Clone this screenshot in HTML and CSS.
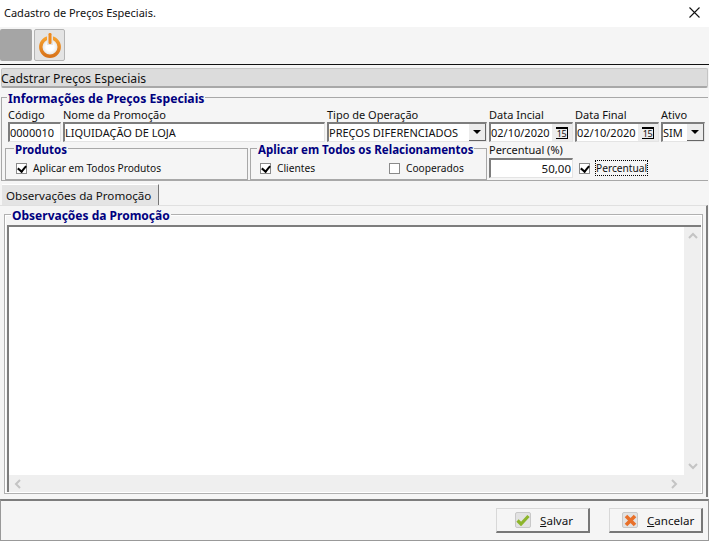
FILE: index.html
```html
<!DOCTYPE html>
<html>
	<head>
		<meta charset="utf-8" />
		<title>Cadastro de Preços Especiais</title>
		<link rel="stylesheet" href="styles.css">
	</head>
	<body>
		<header class="title-bar">
			<span>Cadastro de Preços Especiais.</span>
			<svg class="close" width="11" height="11" viewBox="0 0 11 11"><path d="M0.5 0.5L10.5 10.5M10.5 0.5L0.5 10.5" stroke="#111" stroke-width="1.1" fill="none"/></svg>
		</header>
		<div class="toolbar">
			<div class="tool-blank"></div>
			<div class="tool-power">
				<svg width="26" height="28" viewBox="0 0 26 28">
					<defs>
						<linearGradient id="ring" x1="0" y1="0" x2="0" y2="1">
							<stop offset="0" stop-color="#f5a030"/>
							<stop offset="1" stop-color="#d9741a"/>
						</linearGradient>
						<radialGradient id="core">
							<stop offset="0.4" stop-color="#fff"/>
							<stop offset="1" stop-color="#dcdcdc"/>
						</radialGradient>
					</defs>
					<circle cx="13" cy="16" r="9.2" fill="url(#core)" stroke="url(#ring)" stroke-width="3.4"/>
					<rect x="10" y="1" width="6" height="13" fill="#e4e4e4"/>
					<rect x="11.5" y="2" width="3" height="11" rx="1.2" fill="#ee8a1e"/>
				</svg>
			</div>
		</div>
		<div class="section-bar">Cadstrar Preços Especiais</div>

		<section class="group info">
			<div class="legend">Informações de Preços Especiais</div>
			<div class="fields">
				<label class="field w-code"><span>Código</span><div class="input">0000010</div></label>
				<label class="field w-name"><span>Nome da Promoção</span><div class="input">LIQUIDAÇÃO DE LOJA</div></label>
				<label class="field w-tipo"><span>Tipo de Operação</span>
					<div class="input combo">PREÇOS DIFERENCIADOS<i class="drop"></i></div>
				</label>
				<label class="field w-date"><span>Data Incial</span>
					<div class="input combo">02/10/2020<i class="cal"><b>15</b></i></div>
				</label>
				<label class="field w-date"><span>Data Final</span>
					<div class="input combo">02/10/2020<i class="cal"><b>15</b></i></div>
				</label>
				<label class="field w-ativo"><span>Ativo</span>
					<div class="input combo">SIM<i class="drop"></i></div>
				</label>
			</div>
			<div class="lower">
				<div class="group sub w-prod">
					<div class="legend small">Produtos</div>
					<div class="check-row"><span class="check on"></span>Aplicar em Todos Produtos</div>
				</div>
				<div class="group sub w-rel">
					<div class="legend small">Aplicar em Todos os Relacionamentos</div>
					<div class="check-row">
						<div class="check-item first"><span class="check on"></span>Clientes</div>
						<div class="check-item"><span class="check"></span>Cooperados</div>
					</div>
				</div>
				<div class="percent">
					<span>Percentual (%)</span>
					<div class="percent-row">
						<div class="input number">50,00</div>
						<span class="check on"></span>
						<span class="focus-label">Percentual</span>
					</div>
				</div>
			</div>
		</section>

		<div class="tabs"><div class="tab">Observações da Promoção</div></div>
		<div class="tab-panel">
			<section class="group notes">
				<div class="legend">Observações da Promoção</div>
				<div class="memo">
					<div class="memo-top">
						<div class="memo-text"></div>
						<div class="scroll-v">
							<svg width="10" height="7" viewBox="0 0 10 7"><path d="M1 6L5 2L9 6" stroke="#c4c4c4" stroke-width="2" fill="none"/></svg>
							<svg width="10" height="7" viewBox="0 0 10 7"><path d="M1 1L5 5L9 1" stroke="#c4c4c4" stroke-width="2" fill="none"/></svg>
						</div>
					</div>
					<div class="scroll-h">
						<svg width="7" height="10" viewBox="0 0 7 10"><path d="M6 1L2 5L6 9" stroke="#c4c4c4" stroke-width="2" fill="none"/></svg>
						<svg width="7" height="10" viewBox="0 0 7 10"><path d="M1 1L5 5L1 9" stroke="#c4c4c4" stroke-width="2" fill="none"/></svg>
					</div>
				</div>
			</section>
		</div>

		<footer class="actions">
			<button class="btn">
				<span class="btn-icon">
					<svg width="14" height="12" viewBox="0 0 14 12"><path d="M1.5 6.5L5 10L12.5 2" stroke="#8db52c" stroke-width="3.2" fill="none"/></svg>
				</span>
				<span class="btn-text"><u>S</u>alvar</span>
			</button>
			<button class="btn cancel">
				<span class="btn-icon">
					<svg width="13" height="13" viewBox="0 0 13 13"><path d="M2 2L11 11M11 2L2 11" stroke="#e8702a" stroke-width="3.6" fill="none"/></svg>
				</span>
				<span class="btn-text"><u>C</u>ancelar</span>
			</button>
		</footer>
	</body>
</html>
```

FILE: styles.css
```css
body {
	margin: 0;
	width: 709px;
	height: 541px;
	overflow: hidden;
	background: #f5f5f5;
	color: #111;
	font-family: "Noto Sans", sans-serif;
	font-size: 11px;
	line-height: 14px;
}

.title-bar {
	height: 27px;
	background: #fff;
	display: flex;
	align-items: center;
	justify-content: space-between;
	padding: 0 9px 2px 4px;
	box-sizing: border-box;
}

.toolbar {
	height: 38px;
	box-sizing: border-box;
	display: flex;
	gap: 2px;
	padding-top: 2px;
	background: #f5f5f5;
	border-bottom: 1px solid #111;
}

.tool-blank {
	width: 32px;
	height: 32px;
	background: #a5a5a5;
	border-radius: 2px;
}

.tool-power {
	width: 29px;
	height: 30px;
	background: #e4e4e4;
	border: 1px solid #b4b4b4;
	border-radius: 2px;
	display: flex;
	align-items: center;
	justify-content: center;
}

.section-bar {
	height: 20px;
	margin: 3px 0 0 1px;
	width: 707px;
	box-sizing: border-box;
	background: #dcdcdc;
	border: 1px solid #c4c4c4;
	border-bottom: 2px solid #a8a8a8;
	border-radius: 2px;
	font-size: 12.2px;
	line-height: 19px;
	white-space: nowrap;
	text-indent: -1px;
}

.group {
	position: relative;
	border: 1px solid #a8a8a8;
	box-sizing: border-box;
}

.legend {
	position: absolute;
	left: 5px;
	top: -5px;
	padding: 0 1px;
	background: #f5f5f5;
	color: #00007f;
	font-size: 12.2px;
	line-height: 12px;
	font-weight: bold;
	white-space: nowrap;
}

.legend.small {
	left: 8px;
	top: -5px;
	font-size: 11.5px;
}

.w-rel .legend.small {
	left: 6px;
}

.notes .legend {
	left: 6px;
	font-size: 12px;
}

.info {
	margin: 9px 0 0 1px;
	width: 707px;
	height: 84px;
	border-right: 0;
	padding: 8px 0 0 6px;
}

.fields {
	display: flex;
	gap: 1px;
	column-gap: 2px;
}

.field {
	display: flex;
	flex-direction: column;
	gap: 0;
}

.field span {
	height: 16px;
	line-height: 17px;
	white-space: nowrap;
}

.input {
	height: 20px;
	box-sizing: border-box;
	background: #fff;
	border: 1px solid #e4e4e4;
	border-top: 2px solid #7d7d7d;
	border-left: 2px solid #7d7d7d;
	padding: 0;
	line-height: 17px;
	white-space: nowrap;
	position: relative;
}

.w-code { width: 53px; }
.w-name { width: 262px; }
.w-tipo { width: 160px; }
.w-date { width: 84px; }
.w-ativo { width: 44px; }

.drop {
	position: absolute;
	right: 0;
	top: 0;
	bottom: 0;
	width: 17px;
	background: #ececec;
	border-right: 1px solid #666;
	border-bottom: 1px solid #666;
	box-sizing: border-box;
}

.drop::after {
	content: "";
	position: absolute;
	left: 4px;
	top: 6px;
	border: 4px solid transparent;
	border-top: 4px solid #000;
	border-bottom: 0;
}

.cal {
	position: absolute;
	right: 0;
	top: 0;
	bottom: 0;
	width: 20px;
	background: #ececec;
	display: flex;
	align-items: center;
	justify-content: center;
	font-style: normal;
}

.cal b {
	width: 12px;
	height: 12px;
	box-sizing: border-box;
	border-top: 2px solid #000;
	border-bottom: 1px solid #000;
	border-right: 1px solid #000;
	font-size: 9px;
	font-weight: normal;
	line-height: 9px;
	text-align: center;
	letter-spacing: -0.5px;
}

.lower {
	display: flex;
	gap: 2px;
	margin: 6px 0 0 -3px;
}

.sub {
	height: 32px;
	padding: 12px 0 0 10px;
}

.w-prod { width: 243px; }
.w-rel { width: 237px; padding-left: 9px; }

.check-row {
	display: flex;
	align-items: center;
	height: 14px;
	white-space: nowrap;
	font-size: 10.2px;
}

.check-item {
	display: flex;
	align-items: center;
	flex: none;
}

.check-item.first {
	width: 129px;
}

.check {
	width: 11px;
	height: 11px;
	flex: none;
	box-sizing: border-box;
	background: #fff;
	border: 1px solid #8a8a8a;
	margin-right: 6px;
	position: relative;
}

.check.on::after {
	content: "";
	position: absolute;
	left: 1.5px;
	top: 0;
	width: 4px;
	height: 6px;
	border-right: 2px solid #000;
	border-bottom: 2px solid #000;
	transform: rotate(40deg);
}

.percent {
	width: 216px;
}

.percent > span {
	display: block;
	height: 14px;
	margin-top: -5px;
}

.percent-row {
	display: flex;
	align-items: center;
	margin-top: 1px;
}

.number {
	width: 84px;
	text-align: right;
	font-size: 11.5px;
	margin-right: 6px;
	padding-right: 1px;
}

.percent-row .check {
	margin-right: 5px;
}

.focus-label {
	border: 1px dotted #000;
	height: 14px;
	line-height: 14px;
	font-size: 10.2px;
}

.tabs {
	margin: 3px 0 0 2px;
	height: 21px;
}

.tab {
	width: 157px;
	height: 21px;
	box-sizing: border-box;
	background: #e4e4e4;
	border-right: 1px solid #777;
	border-top: 1px solid #fff;
	padding-left: 4px;
	font-size: 11.6px;
	line-height: 22px;
	white-space: nowrap;
}

.tab-panel {
	height: 292px;
	width: 708px;
	box-sizing: border-box;
	border-top: 1px solid #e0e0e0;
	border-right: 2px solid #7d7d7d;
	padding: 8px 3px 3px 4px;
}

.notes {
	height: 280px;
	border-color: #b0b0b0;
	box-shadow: inset 0 0 0 1px #fff;
	padding: 10px 1px 2px 2px;
}

.memo {
	height: 267px;
	box-sizing: border-box;
	border-top: 2px solid #7d7d7d;
	border-left: 2px solid #7d7d7d;
	display: flex;
	flex-direction: column;
}

.memo-top {
	flex: 1;
	display: flex;
}

.memo-text {
	flex: 1;
	background: #fff;
}

.scroll-v {
	width: 17px;
	background: #efefef;
	display: flex;
	flex-direction: column;
	justify-content: space-between;
	align-items: center;
	padding: 5px 0;
	box-sizing: border-box;
}

.scroll-h {
	height: 17px;
	background: #efefef;
	display: flex;
	justify-content: space-between;
	align-items: center;
	padding: 0 23px 0 5px;
}

.actions {
	height: 42px;
	box-sizing: border-box;
	margin-top: 2px;
	border-top: 2px solid #7d7d7d;
	border-left: 1px solid #999;
	border-right: 1px solid #999;
	border-bottom: 1px solid #999;
	display: flex;
	justify-content: flex-end;
	gap: 19px;
	padding: 7px 5px 0 0;
}

.btn {
	width: 94px;
	height: 25px;
	padding: 0 0 0 18px;
	background: #f5f5f5;
	border: 1px solid #d8d8d8;
	border-right: 2px solid #777;
	border-bottom: 2px solid #777;
	display: flex;
	align-items: center;
	font-family: inherit;
	font-size: 11.6px;
	color: #111;
}

.btn.cancel {
	padding-left: 12px;
}

.btn-icon {
	width: 16px;
	height: 16px;
	box-sizing: border-box;
	background: #e2e2e2;
	border: 1px solid #c8c8c8;
	border-radius: 2px;
	display: flex;
	align-items: center;
	justify-content: center;
	margin-right: 9px;
}
```
